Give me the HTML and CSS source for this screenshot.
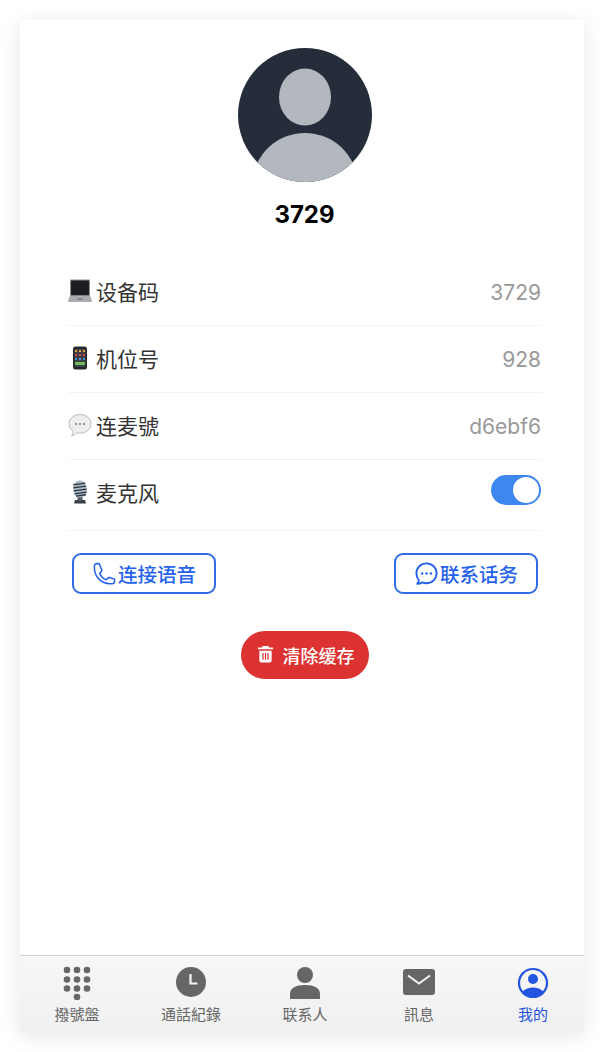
FILE: index.html
```html
<!DOCTYPE html>
<html lang="zh">
<head>
    <meta charset="UTF-8">
    <meta name="viewport" content="width=device-width, initial-scale=1.0">
    <title>我的</title>
    <link rel="stylesheet" href="styles.css">
</head>
<body>
    <div class="phone">
        <main class="profile">
            <!-- Avatar -->
            <svg class="avatar" viewBox="0 0 134 134">
                <defs><clipPath id="avatarClip"><circle cx="67" cy="67" r="67"/></clipPath></defs>
                <circle cx="67" cy="67" r="67" fill="#252d3b"/>
                <g clip-path="url(#avatarClip)" fill="#b3b8bf">
                    <ellipse cx="67" cy="49" rx="26" ry="28.5"/>
                    <ellipse cx="67" cy="135" rx="52" ry="50"/>
                </g>
            </svg>
            <h1 class="name">3729</h1>

            <!-- Info rows -->
            <ul class="info">
                <li class="row">
                    <span class="row-label">
                        <svg class="emoji" viewBox="0 0 24 24">
                            <path d="M3 0.500h18a1 1 0 0 1 1 1V17H2V1.500a1 1 0 0 1 1-1z" fill="#8d8f93"/>
                            <path d="M3 1.500h18V16.500H3z" fill="#1c1d21"/>
                            <path d="M2 16.500h20l2 5a1 1 0 0 1-1 1.500H1a1 1 0 0 1-1-1.500z" fill="#a9abae"/>
                            <path d="M9 19h6v1.800H9z" fill="#85878b"/>
                        </svg>
                        设备码
                    </span>
                    <span class="row-value">3729</span>
                </li>
                <li class="row">
                    <span class="row-label">
                        <svg class="emoji" viewBox="0 0 24 24">
                            <rect x="5" y="0.500" width="14" height="23" rx="2.500" fill="#26282c"/>
                            <rect x="6.500" y="3" width="11" height="18" fill="#3b3f46"/>
                            <path d="M7 4h2v2H7zM11 4h2v2h-2zM15 4h2v2h-2z" fill="#e9a23b"/>
                            <path d="M7 8h2v2H7zM11 8h2v2h-2zM15 8h2v2h-2z" fill="#d9483b"/>
                            <path d="M7 12h2v2H7zM11 12h2v2h-2zM15 12h2v2h-2z" fill="#4a90d9"/>
                            <path d="M7 16h10v3H7z" fill="#6fbf5b"/>
                        </svg>
                        机位号
                    </span>
                    <span class="row-value">928</span>
                </li>
                <li class="row">
                    <span class="row-label">
                        <svg class="emoji" viewBox="0 0 24 24">
                            <path d="M12 1.500c6.200 0 11 3.900 11 9.300s-4.800 9.300-11 9.300c-1 0-2-.1-3-.4-1.300 1.500-3.200 2.700-5.500 3 1-1.200 1.500-2.600 1.500-4.400C2.700 16.500 1 13.900 1 10.800 1 5.400 5.800 1.500 12 1.500z" fill="#eceef0" stroke="#b9bcc0" stroke-width="1"/>
                            <circle cx="8" cy="11" r="1" fill="#75787c"/>
                            <circle cx="12" cy="11" r="1" fill="#75787c"/>
                            <circle cx="16" cy="11" r="1" fill="#75787c"/>
                        </svg>
                        连麦號
                    </span>
                    <span class="row-value">d6ebf6</span>
                </li>
                <li class="row row-last">
                    <span class="row-label">
                        <svg class="emoji" viewBox="0 0 24 24">
                            <path d="M7 20h10l1 3.500H6z" fill="#3a3c40"/>
                            <rect x="9.500" y="15" width="5" height="6" fill="#55585c"/>
                            <g transform="rotate(-8 12 9)">
                                <rect x="5.500" y="0.500" width="13" height="17" rx="6" fill="#a9bccb"/>
                                <path d="M6 4h12M5.500 7h13M5.500 10h13M6 13h12M7 15.500h10" stroke="#2e3338" stroke-width="1.300"/>
                            </g>
                        </svg>
                        麦克风
                    </span>
                    <span class="toggle"><span class="toggle-knob"></span></span>
                </li>
            </ul>

            <!-- Actions -->
            <div class="actions">
                <button type="button" class="btn-outline">
                    <svg class="btn-icon" viewBox="0 0 24 24" fill="none" stroke="currentColor" stroke-width="1.500" stroke-linecap="round" stroke-linejoin="round">
                        <path d="M2.300 6.800c0 8.300 6.700 15 15 15H19.500a2.300 2.300 0 0 0 2.200-2.300v-1.400c0-.5-.3-1-.9-1.100l-4.400-1.100c-.4-.1-.9.100-1.200.400l-1 1.300c-.3.400-.8.500-1.200.3a12 12 0 0 1-5.600-5.600c-.2-.4-.1-.9.300-1.200l1.300-1c.3-.3.500-.8.400-1.200L7.300 3.400c-.1-.6-.6-.9-1.100-.9H4.600a2.300 2.300 0 0 0-2.300 2.300z"/>
                    </svg>
                    连接语音
                </button>
                <button type="button" class="btn-outline">
                    <svg class="btn-icon" viewBox="0 0 24 24" fill="none" stroke="currentColor" stroke-width="1.800" stroke-linecap="round" stroke-linejoin="round">
                        <path d="M12 2.300c5.400 0 9.700 4.200 9.700 9.500s-4.300 9.500-9.700 9.500c-1.400 0-2.700-.3-3.900-.8-1.500.9-3.200 1.400-5 1.400.9-1 1.400-2.200 1.500-3.600C3.200 16.600 2.300 14.300 2.300 11.800 2.300 6.500 6.600 2.300 12 2.300z"/>
                        <circle cx="7.800" cy="12" r="1.200" fill="currentColor" stroke="none"/>
                        <circle cx="12" cy="12" r="1.200" fill="currentColor" stroke="none"/>
                        <circle cx="16.200" cy="12" r="1.200" fill="currentColor" stroke="none"/>
                    </svg>
                    联系话务
                </button>
            </div>

            <button type="button" class="btn-clear">
                <svg class="clear-icon" viewBox="0 0 18 18" fill="currentColor">
                    <path d="M6 0.500h6l.6 1.500H17v2H1V2h4.400z"/>
                    <path fill-rule="evenodd" d="M2.500 5.500h13V16a2 2 0 0 1-2 2h-9a2 2 0 0 1-2-2zM5.700 8v7.200h1.300V8zM8.350 8v7.200h1.300V8zM11 8v7.200h1.300V8z"/>
                </svg>
                清除缓存
            </button>
        </main>

        <!-- Bottom tabs -->
        <nav class="tabbar">
            <a class="tab">
                <svg class="tab-icon" viewBox="0 0 30 34" fill="currentColor">
                    <circle cx="5" cy="4" r="3.300"/><circle cx="15" cy="4" r="3.300"/><circle cx="25" cy="4" r="3.300"/>
                    <circle cx="5" cy="13.500" r="3.300"/><circle cx="15" cy="13.500" r="3.300"/><circle cx="25" cy="13.500" r="3.300"/>
                    <circle cx="5" cy="22.500" r="3.300"/><circle cx="15" cy="22.500" r="3.300"/><circle cx="25" cy="22.500" r="3.300"/>
                    <circle cx="15" cy="31" r="3.300"/>
                </svg>
                <span>撥號盤</span>
            </a>
            <a class="tab">
                <svg class="tab-icon" viewBox="0 0 34 34">
                    <circle cx="17" cy="16" r="15" fill="currentColor"/>
                    <path d="M16.500 8v9.500h7" fill="none" stroke="#f5f5f5" stroke-width="2.200"/>
                </svg>
                <span>通話紀錄</span>
            </a>
            <a class="tab">
                <svg class="tab-icon" viewBox="0 0 34 34" fill="currentColor">
                    <circle cx="17" cy="9" r="8"/>
                    <path d="M2 33v-5c0-6 6-9 15-9s15 3 15 9v5z"/>
                </svg>
                <span>联系人</span>
            </a>
            <a class="tab">
                <svg class="tab-icon" viewBox="0 0 34 34">
                    <rect x="1" y="3" width="32" height="26" rx="3" fill="currentColor"/>
                    <path d="M6 9.500l11 8 11-8" fill="none" stroke="#f5f5f5" stroke-width="2"/>
                </svg>
                <span>訊息</span>
            </a>
            <a class="tab tab-active">
                <svg class="tab-icon" viewBox="0 0 34 34">
                    <defs><clipPath id="meClip"><circle cx="17" cy="17" r="14"/></clipPath></defs>
                    <circle cx="17" cy="17" r="14" fill="none" stroke="currentColor" stroke-width="2.200"/>
                    <circle cx="17" cy="13" r="5" fill="currentColor"/>
                    <ellipse cx="17" cy="32" rx="13" ry="10.500" fill="currentColor" clip-path="url(#meClip)"/>
                </svg>
                <span>我的</span>
            </a>
        </nav>
    </div>
</body>
</html>
```

FILE: styles.css
```css
* {
    box-sizing: border-box;
}

html, body {
    margin: 0;
    height: 100%;
    background-color: #fff;
}

body {
    padding: 20px;
    font-family: Inter, "Noto Sans CJK SC", sans-serif;
    overflow: hidden;
}

.phone {
    height: 1012px;
    display: flex;
    flex-direction: column;
    background-color: #fff;
    box-shadow: 0 4px 20px rgba(0, 0, 0, 0.1);
}

.profile {
    flex: 1;
    padding: 28px 43px 0 48px;
    display: flex;
    flex-direction: column;
    align-items: center;
}

.avatar {
    width: 134px;
    height: 134px;
    display: block;
}

.name {
    margin: 17px 0 0;
    font-size: 24px;
    line-height: 32px;
    font-weight: 700;
    color: #000;
}

.info {
    width: 100%;
    margin: 28px 0 0;
    padding: 0;
    list-style-type: none;
}

.row {
    height: 67px;
    display: flex;
    align-items: center;
    justify-content: space-between;
    border-bottom: 1px solid #f3f4f6;
}

.row-last {
    height: 71px;
    padding-bottom: 4px;
}

.row-label {
    display: flex;
    align-items: center;
    gap: 4px;
    padding-bottom: 2px;
    font-size: 21px;
    color: #333;
}

.emoji {
    width: 24px;
    height: 24px;
    display: block;
}

.row-value {
    font-size: 21px;
    color: #999;
}

.toggle {
    width: 50px;
    height: 30px;
    margin-bottom: 6px;
    padding: 2px;
    border-radius: 15px;
    background-color: #3f87f0;
    display: flex;
    justify-content: flex-end;
}

.toggle-knob {
    width: 26px;
    height: 26px;
    border-radius: 50%;
    background-color: #fff;
}

.actions {
    width: 100%;
    margin-top: 22px;
    padding: 0 3px 0 4px;
    display: flex;
    justify-content: space-between;
}

.btn-outline {
    width: 144px;
    height: 41px;
    padding: 0;
    display: flex;
    align-items: center;
    justify-content: center;
    gap: 1px;
    background-color: #fff;
    border: 2px solid #2f6ae8;
    border-radius: 9px;
    color: #2563eb;
    font-family: inherit;
    font-size: 19.5px;
    font-weight: 500;
    cursor: pointer;
}

.btn-icon {
    width: 25px;
    height: 25px;
}

.btn-clear {
    width: 128px;
    height: 48px;
    margin-top: 37px;
    padding: 0 14px 0 16px;
    display: flex;
    align-items: center;
    gap: 9px;
    background-color: #dc3232;
    border: none;
    border-radius: 24px;
    color: #fff;
    font-family: inherit;
    font-size: 18px;
    font-weight: 500;
    cursor: pointer;
}

.clear-icon {
    width: 17px;
    height: 18px;
    margin-top: -3px;
}

.tabbar {
    height: 77px;
    display: flex;
    border-top: 1px solid #d4d4d4;
    background: linear-gradient(#f7f7f7, #f0f0f0);
    overflow: hidden;
}

.tab {
    flex: 0 0 114px;
    display: flex;
    flex-direction: column;
    align-items: center;
    padding-top: 10px;
    color: #666;
    font-size: 15px;
    line-height: 20px;
}

.tab-active {
    color: #2454e0;
}

.tab-icon {
    width: 34px;
    height: 34px;
    margin-bottom: 5px;
}
```
